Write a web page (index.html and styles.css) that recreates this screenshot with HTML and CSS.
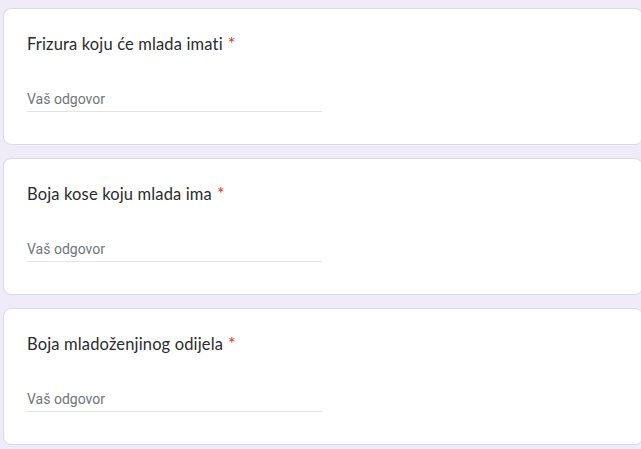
FILE: index.html
```html
<!DOCTYPE html>
<html lang="hr">
<head>
<meta charset="utf-8">
<title>Obrazac</title>
<link rel="stylesheet" href="styles.css">
</head>
<body>
<main class="form">
  <section class="card">
    <div class="question">Frizura koju će mlada imati<span class="req">*</span></div>
    <div class="answer"><span class="placeholder">Vaš odgovor</span></div>
  </section>
  <section class="card">
    <div class="question">Boja kose koju mlada ima<span class="req">*</span></div>
    <div class="answer"><span class="placeholder">Vaš odgovor</span></div>
  </section>
  <section class="card">
    <div class="question">Boja mladoženjinog odijela<span class="req">*</span></div>
    <div class="answer"><span class="placeholder">Vaš odgovor</span></div>
  </section>
</main>
</body>
</html>
```
FILE: styles.css
```css
html, body {
  margin: 0;
  padding: 0;
  background: #f0ebf8;
  width: 641px;
  height: 449px;
  overflow: hidden;
}
.form {
  display: flex;
  flex-direction: column;
  gap: 13px;
  padding: 8px 0 0 3px;
}
.card {
  box-sizing: border-box;
  width: 640px;
  height: 137px;
  background: #fff;
  border: 1px solid #dadce0;
  border-radius: 8px;
  padding: 23px 23px 0 23px;
}
.question {
  font-family: Lato, "Open Sans", sans-serif;
  font-size: 16.5px;
  font-weight: 400;
  line-height: 24px;
  height: 24px;
  color: #2a2b2e;
  letter-spacing: 0.15px;
}
.req {
  color: #d93025;
  margin-left: 5px;
  font-size: 18px;
  line-height: 1;
}
.answer {
  margin-top: 30px;
  width: 295px;
  height: 25px;
  border-bottom: 1px solid #e3e3e3;
  display: flex;
  align-items: center;
}
.placeholder {
  font-family: Roboto, "Liberation Sans", sans-serif;
  font-size: 14px;
  color: #70757a;
}
```
